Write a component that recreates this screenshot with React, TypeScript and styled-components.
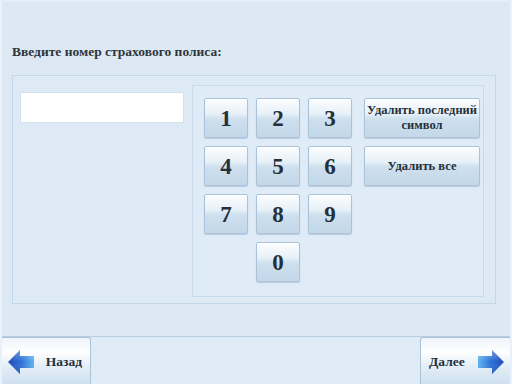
import React from 'react';
import styled, { createGlobalStyle } from 'styled-components';

const GlobalStyle = createGlobalStyle`
  html, body {
    margin: 0;
    padding: 0;
    background: #dce9f5;
  }
  * {
    box-sizing: border-box;
  }
`;

const Screen = styled.div`
  width: 512px;
  height: 384px;
  display: flex;
  flex-direction: column;
  background: #dce9f5;
  border-left: 2px solid #e9f2fa;
  border-right: 2px solid #e9f2fa;
  border-top: 2px solid #e6eff8;
  font-family: 'Liberation Serif', 'DejaVu Serif', serif;
  color: #2b3035;
  overflow: hidden;
`;

const Content = styled.div`
  flex: 1;
  display: flex;
  flex-direction: column;
  padding: 42px 14px 0 10px;
`;

const Title = styled.div`
  font-size: 13.5px;
  font-weight: bold;
  line-height: 16px;
  color: #30353b;
`;

const Panel = styled.div`
  margin-top: 15px;
  height: 229px;
  display: flex;
  gap: 8px;
  padding: 9px 11px 6px 7px;
  border: 1px solid #c4d7e8;
  background: #ddeaf6;
`;

const NumberField = styled.div`
  margin-top: 7px;
  width: 164px;
  height: 31px;
  background: #fff;
  border: 1px solid #d2e1ee;
`;

const Keypad = styled.div`
  flex: 1;
  display: grid;
  grid-template-columns: 44px 44px 44px 120px;
  grid-template-rows: repeat(4, 40px);
  column-gap: 8px;
  row-gap: 8px;
  align-content: start;
  padding: 12px 0 0 11px;
  border: 1px solid #c9dbea;
  background: #dfecf7;
`;

const KeyButton = styled.button<{ $wide?: boolean; $col?: number }>`
  grid-column: ${p => (p.$col ? p.$col : 'auto')};
  margin-left: ${p => (p.$wide ? '4px' : '0')};
  padding: 0;
  border: 1px solid #a9c2d7;
  border-radius: 2px;
  background: linear-gradient(
    to bottom,
    #fbfdfe 0%,
    #e6f0f8 40%,
    #cfe0ee 52%,
    #c3d8ea 100%
  );
  box-shadow: inset 0 1px 0 #ffffff, 0 1px 1px rgba(120, 150, 180, 0.35);
  font-family: 'Liberation Serif', 'DejaVu Serif', serif;
  font-weight: bold;
  font-size: ${p => (p.$wide ? '12.5px' : '23px')};
  line-height: ${p => (p.$wide ? '15px' : '40px')};
  color: #25303a;
  text-align: center;
  cursor: pointer;
`;

const Footer = styled.div`
  height: 48px;
  display: flex;
  justify-content: space-between;
  border-top: 1px solid #b9cde0;
  background: #dfebf6;
  margin: 0 -2px;
`;

const NavButton = styled.button<{ $side: 'left' | 'right' }>`
  width: ${p => (p.$side === 'left' ? '91px' : '92px')};
  height: 48px;
  display: flex;
  align-items: center;
  justify-content: space-between;
  flex-direction: ${p => (p.$side === 'left' ? 'row' : 'row-reverse')};
  padding: ${p => (p.$side === 'left' ? '0 8px 0 6px' : '0 6px 0 8px')};
  border: 1px solid #aac1d6;
  border-bottom: none;
  border-radius: 3px 3px 0 0;
  background: linear-gradient(
    to bottom,
    #eef5fb 0%,
    #ffffff 30%,
    #e4eef7 60%,
    #cddfee 100%
  );
  font-family: 'Liberation Serif', 'DejaVu Serif', serif;
  font-weight: bold;
  font-size: 13.5px;
  color: #25303a;
  cursor: pointer;
`;

const Arrow = ({ dir }: { dir: 'left' | 'right' }) => (
  <svg width="28" height="26" viewBox="0 0 28 26">
    <defs>
      <linearGradient id={`ag-${dir}`} x1="0" y1="0" x2="1" y2="0">
        <stop offset="0" stopColor="#1f49b8" />
        <stop offset="0.5" stopColor="#2a6fd6" />
        <stop offset="1" stopColor="#5cb3ee" />
      </linearGradient>
      <linearGradient id={`av-${dir}`} x1="0" y1="0" x2="0" y2="1">
        <stop offset="0" stopColor="#ffffff" stopOpacity="0.35" />
        <stop offset="0.5" stopColor="#ffffff" stopOpacity="0" />
        <stop offset="1" stopColor="#0a2a80" stopOpacity="0.25" />
      </linearGradient>
    </defs>
    <g transform={dir === 'right' ? 'translate(28,0) scale(-1,1)' : undefined}>
      <path d="M1 13 L13 1 L13 7 L27 7 L27 19 L13 19 L13 25 Z" fill={`url(#ag-${dir})`} />
      <path d="M1 13 L13 1 L13 7 L27 7 L27 19 L13 19 L13 25 Z" fill={`url(#av-${dir})`} />
    </g>
  </svg>
);

const digits = ['1', '2', '3', '4', '5', '6', '7', '8', '9'];

export default function App() {
  return (
    <Screen>
      <GlobalStyle />
      <Content>
        <Title>Введите номер страхового полиса:</Title>
        <Panel>
          <NumberField />
          <Keypad>
            {digits.slice(0, 3).map(d => (
              <KeyButton key={d}>{d}</KeyButton>
            ))}
            <KeyButton $wide>
              Удалить последний
              <br />
              символ
            </KeyButton>
            {digits.slice(3, 6).map(d => (
              <KeyButton key={d}>{d}</KeyButton>
            ))}
            <KeyButton $wide>Удалить все</KeyButton>
            {digits.slice(6, 9).map(d => (
              <KeyButton key={d} $col={digits.indexOf(d) - 5}>
                {d}
              </KeyButton>
            ))}
            <KeyButton $col={2}>0</KeyButton>
          </Keypad>
        </Panel>
      </Content>
      <Footer>
        <NavButton $side="left">
          <Arrow dir="left" />
          <span>Назад</span>
        </NavButton>
        <NavButton $side="right">
          <Arrow dir="right" />
          <span>Далее</span>
        </NavButton>
      </Footer>
    </Screen>
  );
}
